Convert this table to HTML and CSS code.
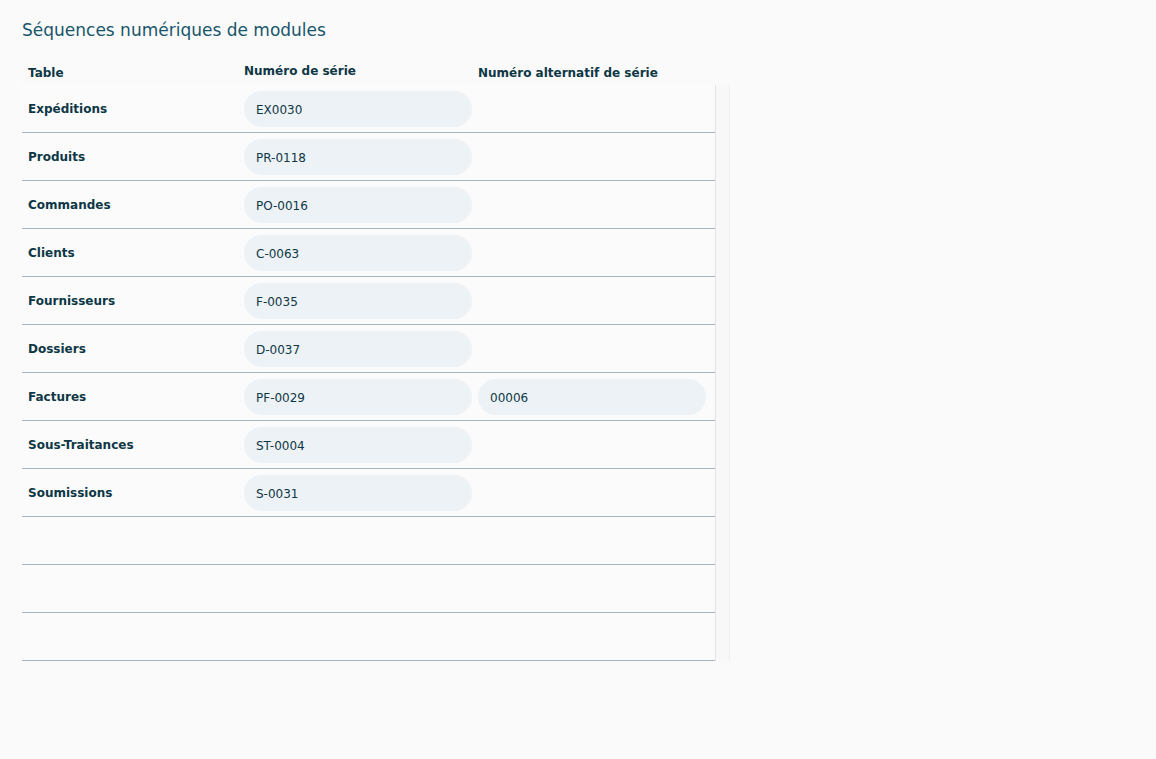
FILE: index.html
```html
<!DOCTYPE html>
<html lang="fr">
<head>
<meta charset="utf-8">
<link rel="stylesheet" href="styles.css">
</head>
<body>
<div class="page">
  <h1 class="title">Séquences numériques de modules</h1>
  <div class="grid">
    <div class="head">
      <div class="hcell c1">Table</div>
      <div class="hcell c2">Numéro de série</div>
      <div class="hcell c3">Numéro alternatif de série</div>
    </div>
    <div class="bodywrap">
      <div class="rows">
        <div class="row"><div class="cell c1 name">Expéditions</div><div class="cell c2"><div class="field">EX0030</div></div><div class="cell c3"></div></div>
        <div class="row"><div class="cell c1 name">Produits</div><div class="cell c2"><div class="field">PR-0118</div></div><div class="cell c3"></div></div>
        <div class="row"><div class="cell c1 name">Commandes</div><div class="cell c2"><div class="field">PO-0016</div></div><div class="cell c3"></div></div>
        <div class="row"><div class="cell c1 name">Clients</div><div class="cell c2"><div class="field">C-0063</div></div><div class="cell c3"></div></div>
        <div class="row"><div class="cell c1 name">Fournisseurs</div><div class="cell c2"><div class="field">F-0035</div></div><div class="cell c3"></div></div>
        <div class="row"><div class="cell c1 name">Dossiers</div><div class="cell c2"><div class="field">D-0037</div></div><div class="cell c3"></div></div>
        <div class="row"><div class="cell c1 name">Factures</div><div class="cell c2"><div class="field">PF-0029</div></div><div class="cell c3"><div class="field">00006</div></div></div>
        <div class="row"><div class="cell c1 name">Sous-Traitances</div><div class="cell c2"><div class="field">ST-0004</div></div><div class="cell c3"></div></div>
        <div class="row"><div class="cell c1 name">Soumissions</div><div class="cell c2"><div class="field">S-0031</div></div><div class="cell c3"></div></div>
        <div class="row"><div class="cell c1"></div><div class="cell c2"></div><div class="cell c3"></div></div>
        <div class="row"><div class="cell c1"></div><div class="cell c2"></div><div class="cell c3"></div></div>
        <div class="row"><div class="cell c1"></div><div class="cell c2"></div><div class="cell c3"></div></div>
      </div>
      <div class="track"></div>
    </div>
  </div>
</div>
</body>
</html>
```

FILE: styles.css
```css
html, body {
  margin: 0;
  padding: 0;
  background: #fafafa;
}
body {
  font-family: "DejaVu Sans", Verdana, sans-serif;
  color: #0d3745;
}
.page {
  padding: 19px 22px 0 22px;
}
.title {
  margin: 0;
  font-size: 17px;
  font-weight: normal;
  color: #17566b;
  line-height: 23px;
}
.grid {
  margin-top: 18px;
}
.head {
  display: flex;
  height: 25px;
}
.hcell {
  font-size: 12px;
  font-weight: bold;
  padding: 6px 6px 0 6px;
  line-height: 14px;
  box-sizing: border-box;
}
.c1 { width: 216px; flex-shrink: 0; }
.c2 { width: 234px; flex-shrink: 0; }
.c3 { width: 243px; flex-shrink: 0; }
.hcell.c2 { padding-top: 4px; }
.bodywrap {
  display: flex;
}
.rows {
  width: 693px;
  background: #fbfbfb;
}
.row {
  display: flex;
  height: 48px;
  border-bottom: 1px solid #a2b4c4;
  box-sizing: border-box;
}
.cell {
  box-sizing: border-box;
  padding: 6px 6px 5px 6px;
  display: flex;
  align-items: flex-start;
}
.cell.name {
  font-size: 12px;
  font-weight: bold;
  padding-top: 17px;
  line-height: 14px;
}
.field {
  flex-shrink: 0;
  width: 228px;
  height: 36px;
  box-sizing: border-box;
  border-radius: 18px;
  background: #edf2f6;
  font-size: 12px;
  line-height: 14px;
  padding: 12px 0 0 12px;
  color: #0d3745;
}
.track {
  width: 15px;
  box-sizing: border-box;
  border-left: 1px solid #e3e3e3;
  border-right: 1px solid #efefef;
  background: #f8f8f8;
}
```
